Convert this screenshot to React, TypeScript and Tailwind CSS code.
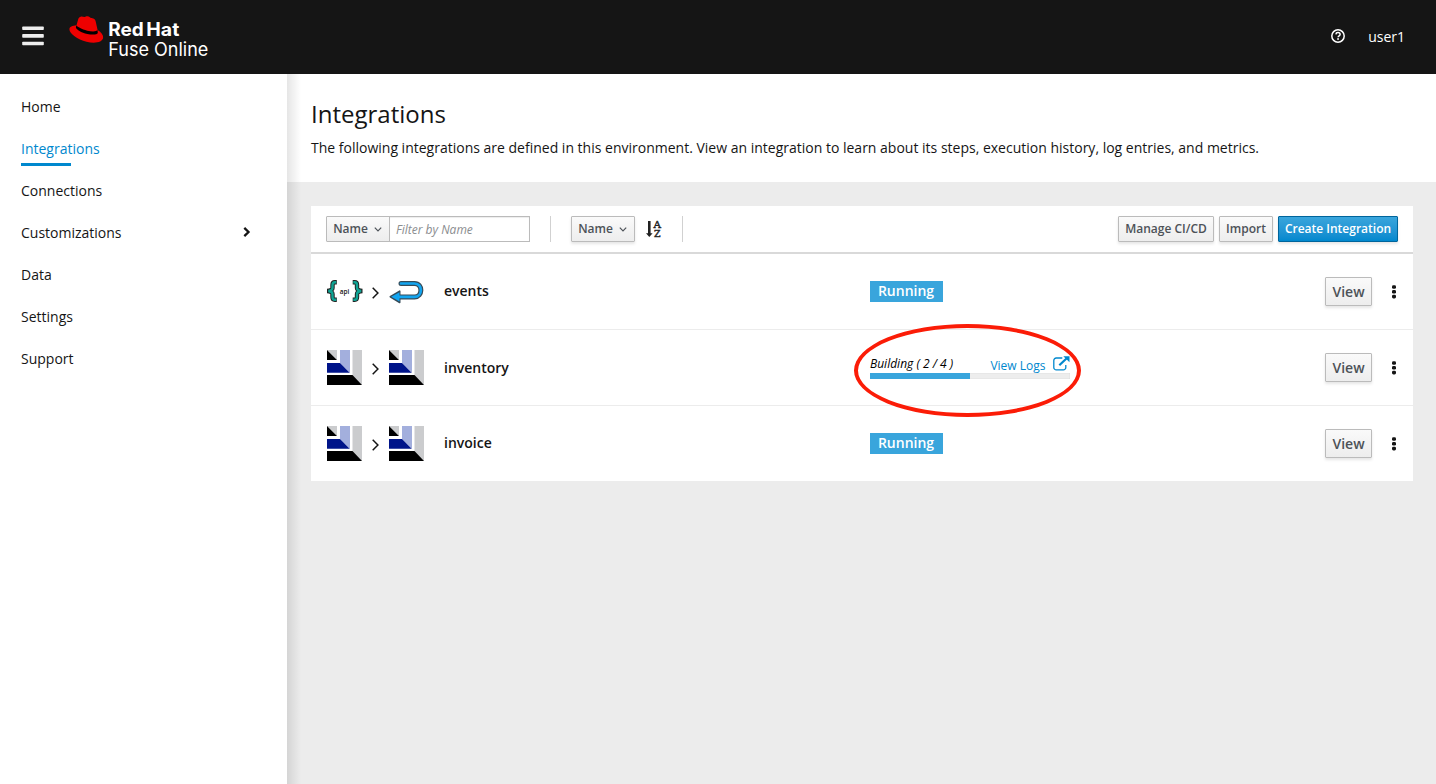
import React from "react";

const BTN =
  "flex items-center justify-center border border-[#bbb] bg-linear-to-b from-[#fafafa] to-[#ededed] font-semibold text-[#4d5258] rounded-[1px] whitespace-nowrap";

function Hat() {
  return (
    <svg width="35" height="28" viewBox="0 0 35 28" className="block">
      <path
        fill="#e00"
        d="M7.500 9.200C3.500 9.500.4 10.600.4 13.300.4 17.800 8.500 23.500 17.500 25.800 26.200 27.900 33.400 26.300 34.100 21.800 34.500 19 32.300 16.300 28.600 14L26.700 5.500C26.300 3.600 25.500 2.800 22.500 2.100 20.800 1.700 20.300.5 18.500.3 17.200.2 16.700.9 15.600 1 14.300 1.100 13.500.3 12.200.5 10.400.8 9.700 2 9.200 3.300z"
      />
      <path
        fill="#000"
        d="M7.400 9.300 6.900 11.200C6.900 13.500 12.500 16.800 18.300 18 23.400 19 28 18.900 28.800 16.900L28.500 14.100C27.600 15.700 23.400 16 18.200 14.700 12.700 13.400 8.600 11 7.400 9.300z"
      />
    </svg>
  );
}

function Stripes() {
  return (
    <svg width="35" height="35" viewBox="0 0 35 35" className="block">
      <path fill="#cbccce" d="M0 0h10v10zM25.500 0H35v35l-9.500-9.500z" />
      <path fill="#a3afdd" d="M13 0h10v23L13 13z" />
      <path fill="#000" d="M0 0l10 10H0zM0 25h25.500L35 35H0z" />
      <path fill="#001489" d="M0 13h13l9.700 9.700H0z" />
    </svg>
  );
}

function ApiIcon() {
  return (
    <svg width="36" height="22" viewBox="0 0 36 22" className="mt-[-1px] block">
      <g fill="none" strokeLinejoin="miter">
        <g stroke="#222" strokeWidth="4.400">
          <path d="M9.800 2.300H7.800Q5.500 2.300 5.500 5V8Q5.500 10.500 .2 11Q5.500 11.500 5.500 14V17Q5.500 19.700 7.800 19.700H9.800" />
          <path d="M25.700 2.300h2q2.300 0 2.300 2.700v3q0 2.500 5.300 3q-5.300.5-5.300 3V17q0 2.700-2.300 2.700h-2" />
        </g>
        <g stroke="#0fa393" strokeWidth="2.400">
          <path d="M9.200 2.300H7.800Q5.500 2.300 5.500 5V8Q5.500 10.500 1.300 11Q5.500 11.500 5.500 14V17Q5.500 19.700 7.800 19.700H9.200" />
          <path d="M26.300 2.300h1.400q2.300 0 2.300 2.700v3q0 2.500 4.200 3q-4.200.5-4.200 3V17q0 2.700-2.300 2.700h-1.400" />
        </g>
      </g>
      <text x="12.700" y="13.500" fontSize="7" textLength="9.500" lengthAdjust="spacingAndGlyphs" fill="#111" fontFamily="Open Sans" fontWeight="600">
        api
      </text>
    </svg>
  );
}

function ReturnIcon() {
  return (
    <svg width="35" height="24" viewBox="0 0 35 24" className="block">
      <g fill="none" strokeLinecap="round">
        <path stroke="#364b58" strokeWidth="5" d="M12 3.500h13.500c8.800 0 8.200 13.400 0 13.400H10" />
        <path fill="#364b58" stroke="#364b58" strokeWidth="1.600" strokeLinejoin="round" d="M1.300 16.700 10.700 11.200v11.300z" />
        <path fill="#12a5f0" d="M2.200 16.700 10.500 12.200v9.400z" />
        <path stroke="#12a5f0" strokeWidth="2.700" d="M12 3.500h13.500c8.800 0 8.200 13.400 0 13.400H10" />
      </g>
    </svg>
  );
}

function Chevron() {
  return (
    <svg width="8" height="12" viewBox="0 0 8 12" className="block">
      <path d="M.7 .8 5.900 6 .7 11.200" fill="none" stroke="#151515" strokeWidth="1.500" />
    </svg>
  );
}

function Caret() {
  return (
    <svg width="8" height="5" viewBox="0 0 8 5" className="mr-[1px] ml-[6px] block">
      <path d="M.8.7 4 3.900 7.200.7" fill="none" stroke="#4d5258" strokeWidth="1.200" />
    </svg>
  );
}

function Kebab() {
  return (
    <svg width="4" height="14" viewBox="0 0 4 14" className="block">
      <g fill="#151515">
        <rect x="0" y=".2" width="4" height="3.600" rx="1.400" />
        <rect x="0" y="5" width="4" height="3.600" rx="1.400" />
        <rect x="0" y="9.800" width="4" height="3.600" rx="1.400" />
      </g>
    </svg>
  );
}

function SortIcon() {
  return (
    <svg width="16" height="18" viewBox="0 0 16 18" className="block">
      <path fill="#222" d="M2 1h2.600v12.200h2L3.300 17 0 13.200h2z" />
      <g fill="#222" fontFamily="DejaVu Serif" fontWeight="400" stroke="#222" strokeWidth=".4" fontSize="8.500">
        <text x="7.500" y="7.700" textLength="7.500" lengthAdjust="spacingAndGlyphs">A</text>
        <text x="8" y="17" textLength="6.500" lengthAdjust="spacingAndGlyphs">Z</text>
      </g>
    </svg>
  );
}

function ExternalIcon() {
  return (
    <svg width="17" height="15" viewBox="0 0 17 15" className="block">
      <path d="M9.300 2H3.200A2.400 2.400 0 0 0 .8 4.400v7A2.400 2.400 0 0 0 3.200 13.800h7.200a2.400 2.400 0 0 0 2.400-2.400V9" fill="none" stroke="#0088ce" strokeWidth="1.300" />
      <path d="M6.300 9.300 13.500 2.500" stroke="#0088ce" strokeWidth="2.200" fill="none" />
      <path d="M10.300.3h6.200v6z" fill="#0088ce" />
    </svg>
  );
}

function Running() {
  return (
    <span className="flex h-[21px] w-[73px] items-center justify-center bg-[#39a5dc] pr-[1px] text-[14px] leading-[20px] font-semibold text-white">
      Running
    </span>
  );
}

function Building() {
  return (
    <div className="relative w-[200px]">
      <div className="flex h-[18px] justify-between">
        <span className="text-[12px] leading-[18px] whitespace-pre italic text-black">Building ( 2 / 4 )</span>
        <span className="flex gap-[7.500px] text-[#0088ce]">
          <span className="mt-[2px] text-[12px] leading-[18px]">View Logs</span>
          <span className="mt-[1px]"><ExternalIcon /></span>
        </span>
      </div>
      <div className="h-[6px] bg-[#ededed] shadow-[inset_0_0_1px_rgba(3,3,3,0.25)]">
        <div className="h-full w-1/2 bg-[#39a5dc]" />
      </div>
      <div className="absolute top-[-31px] left-[-16px] h-[93px] w-[227px] rounded-[50%] border-4 border-[#fb1c07]" />
    </div>
  );
}

const NAV = ["Home", "Integrations", "Connections", "Customizations", "Data", "Settings", "Support"];

const ROWS = [
  { name: "events", kind: "api", running: true },
  { name: "inventory", kind: "queue", running: false },
  { name: "invoice", kind: "queue", running: true },
];

export default function App() {
  return (
    <div className="flex h-[784px] w-[1436px] flex-col overflow-hidden bg-white font-['Open_Sans',sans-serif] text-[14px] text-[#151515]">
      <header className="flex h-[74px] shrink-0 bg-[#151515] text-white">
        <svg width="69" height="74" viewBox="0 0 69 74" fill="#ededed" className="block">
          <rect x="22.200" y="26.500" width="21.600" height="3.600" rx=".8" />
          <rect x="22.200" y="34.100" width="21.600" height="3.600" rx=".8" />
          <rect x="22.200" y="41.700" width="21.600" height="3.600" rx=".8" />
        </svg>
        <div className="pt-[16px]"><Hat /></div>
        <svg width="110" height="50" className="ml-[4px] mt-[12px]" fill="#fff" fontFamily="Inter, sans-serif">
          <text x="0.300" y="24" fontSize="18.500" fontWeight="700" textLength="35.500" lengthAdjust="spacingAndGlyphs">Red</text>
          <text x="38.300" y="24" fontSize="18.500" fontWeight="700" textLength="33" lengthAdjust="spacingAndGlyphs">Hat</text>
          <text x="0.300" y="43.500" fontSize="18.500" fontWeight="400" textLength="100" lengthAdjust="spacingAndGlyphs">Fuse Online</text>
        </svg>
        <div className="ml-auto flex h-[73px] items-center pr-[31px]">
          <svg width="14" height="14" viewBox="0 0 14 14" className="mt-[-1px] mr-[23px]">
            <circle cx="7" cy="7" r="6.200" fill="none" stroke="#fff" strokeWidth="1.500" />
            <path d="M4.900 5.400C5 4.200 5.900 3.600 7 3.600c1.200 0 2.100.7 2.100 1.800C9.100 6.900 7.100 6.800 7.100 8.300" fill="none" stroke="#fff" strokeWidth="1.500" />
            <rect x="6.200" y="9.200" width="1.700" height="1.600" fill="#fff" />
          </svg>
          <span>user1</span>
        </div>
      </header>

      <div className="flex min-h-0 flex-1">
        <nav className="flex w-[287px] shrink-0 flex-col bg-white pt-[12px] pl-[21px]">
          {NAV.map((item) => (
            <div
              key={item}
              className={
                item === "Integrations"
                  ? "flex h-[42px] flex-col pt-[10px] text-[#0088ce]"
                  : "flex h-[42px] items-start justify-between pt-[10px]"
              }
            >
              <span className="leading-[21px]">{item}</span>
              {item === "Integrations" && <span className="mt-[4px] h-[3px] w-[50px] shrink-0 bg-[#0088ce]" />}
              {item === "Customizations" && (
                <svg width="8" height="10" viewBox="0 0 8 10" className="mt-[5px] mr-[36px]">
                  <path d="M1.300 .9 5.500 5 1.300 9.100" fill="none" stroke="#151515" strokeWidth="2.300" />
                </svg>
              )}
            </div>
          ))}
        </nav>

        <main className="relative flex-1 bg-[#ececec]">
          <section className="h-[108px] bg-white pt-[24px] pl-[24px]">
            <h1 className="text-[24px] leading-[31px]">Integrations</h1>
            <p className="mt-[8px] leading-[21px]">
              The following integrations are defined in this environment. View an integration to learn about its steps, execution history, log entries, and metrics.
            </p>
          </section>

          <section className="mt-[24px] ml-[24px] w-[1102px] bg-white">
            <div className="flex h-[48px] items-start border-b-2 border-[#d9d9d9] pt-[10px] pr-[15px] pl-[15px] text-[12px]">
              <button className={BTN + " h-[26px] w-[64px]"}>Name<Caret /></button>
              <input
                className="ml-[-1px] h-[26px] w-[141px] border border-[#bbb] bg-white px-[6px] text-[12px] italic shadow-[inset_0_1px_1px_rgba(3,3,3,0.075)] outline-none placeholder:text-[#8b8d8f]"
                placeholder="Filter by Name"
              />
              <div className="ml-[20px] h-[26px] w-px bg-[#d1d1d1]" />
              <button className={BTN + " ml-[20px] h-[26px] w-[64px] shadow-[0_2px_3px_rgba(3,3,3,0.1)]"}>Name<Caret /></button>
              <div className="mt-[4px] ml-[11px]"><SortIcon /></div>
              <div className="ml-[20px] h-[26px] w-px bg-[#d1d1d1]" />
              <div className="ml-auto flex">
                <button className={BTN + " h-[26px] w-[96px] shadow-[0_2px_3px_rgba(3,3,3,0.1)]"}>Manage CI/CD</button>
                <button className={BTN + " ml-[5px] h-[26px] w-[54px] shadow-[0_2px_3px_rgba(3,3,3,0.1)]"}>Import</button>
                <button className="ml-[5px] flex h-[26px] w-[120px] items-center justify-center rounded-[1px] border border-[#00659c] bg-linear-to-b from-[#39a5dc] to-[#0088ce] font-semibold whitespace-nowrap text-white shadow-[0_2px_3px_rgba(3,3,3,0.1)]">
                  Create Integration
                </button>
              </div>
            </div>

            {ROWS.map((row, i) => (
              <div
                key={row.name}
                className={
                  i < 2
                    ? "flex h-[76px] items-center border-b border-[#ececec] pr-[17px] pl-[16px]"
                    : "flex h-[75px] items-center pr-[17px] pl-[16px]"
                }
              >
                <div className="flex w-[36px] items-center">{row.kind === "api" ? <ApiIcon /> : <Stripes />}</div>
                <div className="mt-[2px] ml-[9px] w-[17px]"><Chevron /></div>
                <div className="w-[55px]">{row.kind === "api" ? <ReturnIcon /> : <Stripes />}</div>
                <div className={row.running ? "mt-[-2px] w-[426px] font-semibold" : "w-[426px] font-semibold"}>{row.name}</div>
                <div className={row.running ? "mt-[-1px]" : "mt-[-2px]"}>{row.running ? <Running /> : <Building />}</div>
                <button className={BTN + " ml-auto h-[29px] w-[47px] text-[14px] shadow-[0_2px_3px_rgba(3,3,3,0.1)]"}>View</button>
                <div className="ml-[20px]"><Kebab /></div>
              </div>
            ))}
          </section>
          <div className="absolute top-0 left-0 h-full w-[14px] bg-linear-to-r from-black/10 to-transparent" />
        </main>
      </div>
    </div>
  );
}
